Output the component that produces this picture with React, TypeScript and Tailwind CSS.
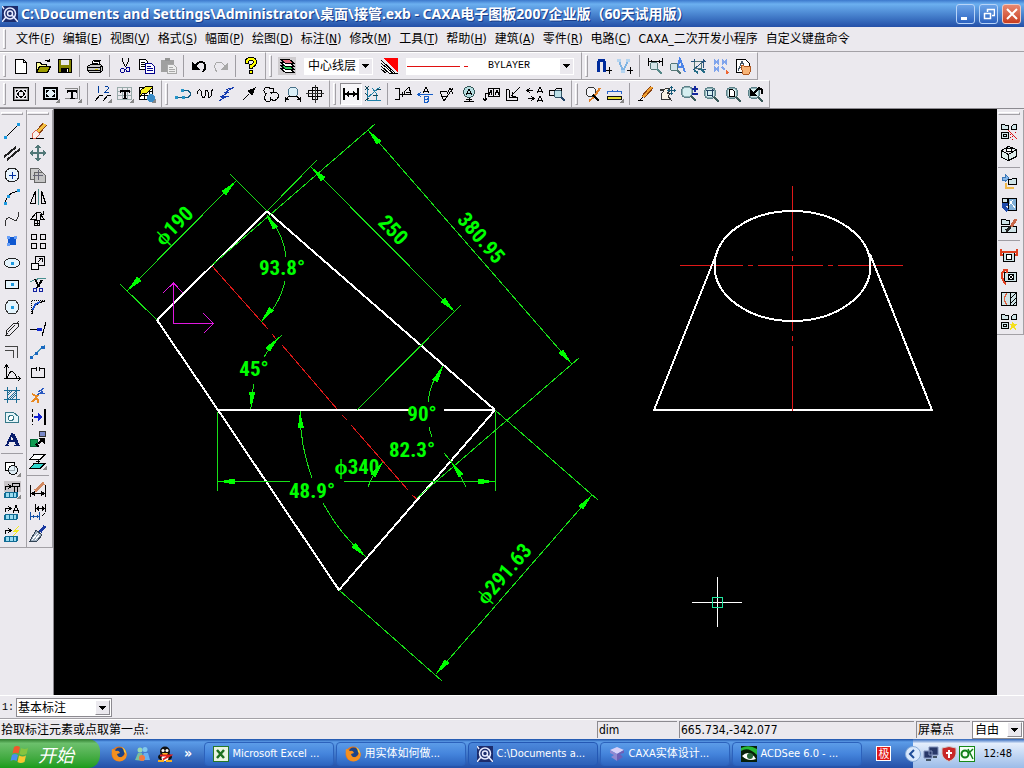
import type { ReactNode } from "react";

type PathProps = { d: string; c?: string; f?: string; w?: number };

const P = ({ d, c = "#000", f = "none", w = 1 }: PathProps) => (
  <path d={d} stroke={c} fill={f} strokeWidth={w} />
);

const Lens = ({ x = 8, y = 8 }: { x?: number; y?: number }) => (
  <>
    <circle cx={x} cy={y} r="6" fill="#d5eef0" stroke="#5b8088" />
    <circle cx={x} cy={y} r="5" fill="none" stroke="#8fb0b4" />
    <path d={`M${x + 4} ${y + 4}l5 5`} stroke="#3a5a5a" strokeWidth="2" />
  </>
);

const Corner = () => <path d="M18 13v5h-5z" fill="#888" />;

const Part = () => (
  <>
    <P d="M1.5 7.5v-5h3l1 1h3v4z" f="#cfe3e6" />
    <P d="M11.5 7.5v-3l2-2h3v5z" f="#cfe3e6" />
    <P d="M1.5 10.5h7v6h-7z" f="#cfe3e6" />
    <P d="M3.5 12.5h3v2h-3z" />
  </>
);

const Strip = () => (
  <>
    <rect x="1" y="11" width="14" height="6" rx="2" fill="#106c94" />
    <path d="M3 12h3v4H3zM7 12h3v4H7zM11 12h2v4h-2z" fill="#9adcf0" />
  </>
);

const Hook = () => <P d="M2.5 9V5.5h5M5 3l3 2.5L5 8" />;

const icons: Record<string, ReactNode> = {
  new: <P d="M3.5 2.5h8l3 3v11h-11zM11.5 2.5v3h3" f="#fff" />,
  open: (
    <>
      <P d="M2.5 15.5v-10h4l1 2h5v2" f="#ffff9c" />
      <P d="M2.5 15.5l3-6h11l-3 6z" f="#9c9c00" />
      <P d="M10.5 4.5q2-3 5 0M15.5 1.5v3h-3" />
    </>
  ),
  save: (
    <>
      <P d="M2.5 2.5h13v13h-13z" f="#848400" />
      <P d="M5 3h8v5H5z" c="none" f="#e8e8e8" />
      <P d="M5 11h8v5H5z" c="none" f="#000" />
      <P d="M11 12h1v3h-1z" c="none" f="#fff" />
    </>
  ),
  print: (
    <>
      <P d="M5.5 8l2-5h7l-2 5" f="#fff" />
      <P d="M1.5 9.5l3-2h10l2 2v4l-2 2h-11l-2-2z" f="#c8c8c8" />
      <P d="M2 10.5h12l2-2M8 4.5h5M7 6.5h5M2 13.5h12M14.5 10v5" />
      <P d="M9 12h3" c="#d8c800" />
    </>
  ),
  cut: (
    <>
      <P d="M6.5 1v3l3 6M12.5 1v3l-3 6" />
      <circle cx="6.5" cy="13.5" r="2" fill="none" stroke="#00008c" strokeWidth="1" />
      <circle cx="12" cy="12.5" r="2" fill="none" stroke="#00008c" strokeWidth="1" />
    </>
  ),
  copy: (
    <>
      <P d="M1.5 2.5h6l2 2v8h-8zM3 5.5h4M3 7.5h4M3 9.5h4" f="#fff" />
      <P d="M7.5 6.5h6l3 3v7h-9zM9 9.5h4M9 11.5h6M9 13.5h6" c="#00008c" f="#fff" />
    </>
  ),
  paste: (
    <>
      <P d="M1 3h13v12H1z" c="none" f="#a0a0a0" />
      <P d="M5 1h5v3H5z" c="none" f="#949494" />
      <P d="M7.5 7.5h6l3 3v6h-9zM9 10.5h4M9 12.5h6M9 14.5h6" c="#a8a8a8" f="#eee" />
    </>
  ),
  undo: (
    <>
      <P d="M5 9q5-6 9-3 3 4-1 9" w={2} />
      <P d="M2 5v8h8z" c="none" f="#000" />
    </>
  ),
  redo: (
    <>
      <P d="M13 9Q8 3 4 6q-3 4 1 9" c="#a8a8a8" />
      <P d="M16 5v8H8z" c="none" f="#a8a8a8" />
    </>
  ),
  help: (
    <>
      <path d="M5 7V4q0-2 4-2t4 3q0 3-4 4v3" stroke="#000" fill="none" strokeWidth="4" />
      <path d="M5 6V4q0-2 4-2t4 3q0 3-4 4v2" stroke="#ff0" fill="none" strokeWidth="2" />
      <circle cx="9" cy="15" r="2" fill="#ff0" stroke="#000" />
    </>
  ),
  layers: (
    <>
      <rect width="18" height="18" fill="#cfcccf" />
      <P d="M2.5 11.5h9l5 4h-9z" f="#fff" />
      <P d="M2.5 8.5h9l5 4h-9z" f="#30d060" />
      <P d="M2.5 5.5h9l5 4h-9z" f="#fff" />
      <P d="M2.5 2.5h9l5 4h-9z" f="#e87080" />
    </>
  ),
  color: (
    <>
      <P d="M.5 3.500l14 13M.5 6.500l12 10h4M.5 9.500l8 7h6M.5 12.500l5 4" f="#fff" />
      <path d="M2 1h15v15z" fill="#f00" />
    </>
  ),
  magnet: (
    <>
      <P d="M4.5 15V6q0-3 3-3t3 3v9" c="#002c9c" w={3} />
      <P d="M12 13.500h6M15 10v7" />
      <P d="M15 12v3M13.500 13.500h3" />
    </>
  ),
  vnav: (
    <>
      <P d="M3 4l4 10 5-10" c="#7fb4e4" w={2} />
      <P d="M1 3.500h4M10 3.500h4M5 14h4" c="#b4d4f0" w={3} />
      <P d="M11 13.500h6M14 10v7" />
    </>
  ),
  qdim: (
    <>
      <P d="M2.5 1v8M16.5 1v8M3 4.500h13M5.500 3v3M13.500 3v3" />
      <circle cx="8" cy="9" r="4" fill="#d4e4e8" stroke="#577" />
      <P d="M11 12l5 5" c="#588" w={2} />
    </>
  ),
  qtext: (
    <>
      <P d="M8 14l4-12 5 13M9 10h6" c="#4c84e8" w={2} />
      <circle cx="6" cy="10" r="4" fill="#d4e4e8" stroke="#577" />
      <P d="M9 13l4 4" c="#577" w={2} />
    </>
  ),
  qhatch: (
    <>
      <P d="M1 4.500h15M4.500 2v11M3 13L15 3M13.500 2v9M8 12.500h8" c="#25527c" />
      <circle cx="8" cy="8" r="4" fill="none" stroke="#577" />
      <P d="M4 13l4 3M11 12l4 4" c="#256c86" w={2} />
    </>
  ),
  four: (
    <>
      <P d="M2 3l5 4M7 3L2 7M10 3l5 4M15 3l-5 4M2 10l5 4M7 10l-5 4" c="#7fa4ec" w={2} />
      <P d="M10 10l3 3" c="#7fa4ec" w={2} />
      <path d="M14 12l3 4-3 1z" fill="#e63" />
    </>
  ),
  hand: (
    <>
      <P d="M2.5 2.5h9l4 4v9h-13z" f="#fff" />
      <P d="M4 14l4-10 2 5M5 10.500h4" c="#456" />
      <P d="M7 9l2-1 2 2 5-1 1 4-2 4H9z" c="#b05820" f="#f7b478" />
    </>
  ),
  fit: (
    <>
      <P d="M1.500 2.500h15v13h-15z" />
      <P d="M2.500 3.500h13v11h-13z" c="#888" />
      <path d="M9 4l2 3H7zM9 14l2-3H7zM4 9l3-2v4zM14 9l-3-2v4zM4 5h3L4 7zM14 5h-3l3 2zM4 13h3l-3-2zM14 13h-3l3-2z" fill="#000" />
    </>
  ),
  frame: (
    <>
      <P d="M2 3h13v11H2z" w={2} f="#e4f0f6" />
      <path d="M4 5h4L4 8zM13 5H9l4 3zM4 12h4L4 9zM13 12H9l4-3z" fill="#000" />
      <Corner />
    </>
  ),
  title: (
    <>
      <P d="M1 3.500h12v10H1M15.500 1v14" c="#888" />
      <P d="M4 6h8M8 6v8" w={2} />
      <P d="M6 13.500h5M3.500 5v3M12.500 5v3" />
      <Corner />
    </>
  ),
  number: (
    <>
      <P d="M1 16l5-6h3M9 16l5-6h3" />
      <P d="M4.500 7.500v-6l-1 1M10.500 2.500l1-1h2l1 1v1l-4 4h4" c="#003c9c" />
      <Corner />
    </>
  ),
  table: (
    <>
      <P d="M1 2.500h15M1 6.500h15M1 10.500h15M1 14.500h15M1.500 2v13M6.500 2v13M11.500 2v13M15.500 2v13" c="#9aa" />
      <P d="M5 6h8M9 6v8" w={2} />
      <P d="M7 13.500h4M4.500 5v3M13.500 5v3" />
      <Corner />
    </>
  ),
  bom: (
    <>
      <P d="M1.500 2.500h13v12h-13zM2 6.500h13M2 10.500h13M6.500 3v12M11 3v12" f="#fff" />
      <path d="M8 1l7 1-7 7-3-1-4 5 2-8z" fill="#f4ec20" stroke="#000" />
      <circle cx="13" cy="13" r="4" fill="#3a8cc8" />
      <Corner />
    </>
  ),
  polyline: (
    <>
      <P d="M1 12.500h7M9 5.500h5l2 2v3l-2 2H9" c="#155a80" />
      <path d="M1 11h3v3H1zM8 11h3v3H8zM7 4h3v3H7z" fill="#2694c8" />
    </>
  ),
  wave: <P d="M1 9q1-5 3-4t2 6q1 4 3 0V7q2-4 3 0v4q1 3 3 0V7l2-3" />,
  zig: <P d="M1 16l8-5H4l7-4H8l8-5M8 4.500l8-2M3 13l8-2" c="#163cb0" />,
  arrow: (
    <>
      <P d="M3 15L9 9" />
      <path d="M16 2l-4 9-5-5z" fill="#000" />
    </>
  ),
  cloud: <P d="M5 9q-5-2-2-6 4-2 5 1 4-2 4 2-1 2-4 1M4 9q-3 4 0 7h4q2-2 0-4M9 9q3-3 6-1 3 3 0 6-3 3-6 0" />,
  circles: (
    <>
      <circle cx="9" cy="7" r="5" fill="#dcf0f8" stroke="#487088" />
      <P d="M2 15l3-4h8l3 4M1.500 12v5M16.500 12v5M2 14.500h3M13 14.500h3" />
    </>
  ),
  hole: (
    <>
      <P d="M2.500 5.500h13v6h-13z" />
      <P d="M6.500 2.500h5v12h-5z" />
      <P d="M0 8.500h18M9 0v18" c="#333" />
    </>
  ),
  dim: (
    <>
      <P d="M2 3v12M16 3v12M2 9h14" w={2} />
      <path d="M3 9l4-3v6zM15 9l-4-3v6z" fill="#000" />
    </>
  ),
  coord: (
    <>
      <P d="M3.500 3v12h13M3 13L16 2M8 3l4 5v8" c="#2182a8" />
      <P d="M1 1l4 4M5 1L1 5M1 8l3 3M1 16l4-3M13 4h4M9 10h5" c="#145" />
    </>
  ),
  d1: <P d="M1 3.500h4v11H1M5 9.500h7M8 7v5M10 9V7l5-5 2 7h-6M12 7h4" />,
  d2: (
    <>
      <P d="M7 8l3-6 3 6M8 6h4" />
      <P d="M2 9.500h15M5 7L2 9.500 5 12" c="#155ec8" />
      <P d="M8.500 11v6h3l1-1v-1l-1-1h-3 3l1-1v-1l-1-1z" c="#155ec8" />
    </>
  ),
  d3: <P d="M2 6.500h7M2 7l4 9 9-13M4 11h4M9 9l3-6 3 6" />,
  d4: (
    <>
      <circle cx="9" cy="7" r="5.500" fill="#b5dde0" stroke="#355" />
      <P d="M6 10l3-6 3 6M7 8.500h4M9.500 13v3M4 16.500h10M6 14.500h6" />
    </>
  ),
  d5: <P d="M6.500 3.500h11v8h-11zM11.500 4v7M13 10l2-5 2 5M6 8.500H3V16M1 13l2 3 2-3M7 10l2-5 1 5" />,
  d6: <P d="M2.500 4v11h11M5.500 5v7h7M16 2l-9 9M8 7v4h4M13.500 12v3M2 4.500h3" />,
  d7: <P d="M1 5.500h6M4 3L1 5.500 4 8M2 13.500h6M5 11l3 2.500L5 16M11 8l3-6 3 6M12 6.500h4M11 17l3-6 3 6M12 15.500h4" />,
  d8: (
    <>
      <P d="M1.500 9.500v-4h5l2-2h5v7h-12z" />
      <circle cx="10" cy="9" r="4" fill="#bde0e8" stroke="#356" />
      <P d="M13 12l4 4" c="#246" w={2} />
    </>
  ),
  z1: (
    <>
      <circle cx="7" cy="7" r="5" fill="#f4f4f8" stroke="#333" />
      <P d="M16 3l-6 9-5 4" c="#e08028" w={2} />
      <P d="M9 10l6 6" w={2} />
    </>
  ),
  z2: (
    <>
      <P d="M1 6.500h15" c="#2864c8" />
      <P d="M1.500 6v3M6.500 5v2M11.500 5v2M15.500 6v3" c="#2864c8" />
      <path d="M1 11h15v4H1z" fill="#111" />
      <P d="M2 13h13" c="#e8dc30" w={2} />
      <Corner />
    </>
  ),
  pencil: (
    <>
      <P d="M16 2l-9 10" c="#8a4010" w={4} />
      <P d="M16 2l-9 10" c="#f0a030" w={2} />
      <P d="M7 12l-3 3q-4 1 3 1" />
    </>
  ),
  pan: (
    <>
      <P d="M3 9l3-3-4-1 5-1 4-1 1 3-3 2 3 1-2 2 3 4-6-1-4 1z" f="#f8f0e4" c="#333" />
      <P d="M10 5.500h7M13.500 2v7" c="#185a78" />
      <path d="M13.500 1l2 2h-4zM13.500 10l2-2h-4zM9 5.500l2-2v4zM18 5.500l-2-2v4z" fill="#185a78" />
    </>
  ),
  zoomin: (
    <>
      <Lens x={7} y={7} />
      <P d="M12 4h6M15 1v6M12 9h6" c="#14289c" w={2} />
    </>
  ),
  zoomwin: (
    <>
      <Lens />
      <P d="M5.500 5.500h5v5h-5zM4 5.500h8M10.500 4v8" c="#204060" />
    </>
  ),
  zoompage: (
    <>
      <Lens />
      <P d="M5.500 4.500h3l2 2v5h-5z" f="#fff" />
    </>
  ),
  zoomback: (
    <>
      <Lens />
      <path d="M4 4v7h7z" fill="#000" />
      <P d="M6 10l7-7 3 2v4" w={2} />
    </>
  ),
  line: (
    <>
      <P d="M3 15L15 3" />
      <path d="M1 14h3v3H1zM14 1h3v3h-3z" fill="#1c9ae0" />
    </>
  ),
  parallel: <P d="M1 13L13 3M4 16L17 5" w={2} c="#222" />,
  circle: (
    <>
      <circle cx="9" cy="9" r="7" fill="#e8f4fc" stroke="#222" />
      <P d="M6 9.500h7M9.500 6v7" c="#0030a0" />
    </>
  ),
  arc: (
    <>
      <P d="M2 16Q3 5 16 3" />
      <path d="M1 14h3v3H1zM4 7h3v3H4zM14 1h3v3h-3z" fill="#1c9ae0" />
    </>
  ),
  spline: <P d="M2 16V12q2-5 5-4t5 3q3-1 4-9" c="#333" />,
  point: (
    <>
      <path d="M5 5h8v8H5z" fill="#1058d0" />
      <path d="M4 4h3v3H4zM11 4h3v3h-3zM4 11h3v3H4z" fill="#68a0f8" />
    </>
  ),
  ellipse: (
    <>
      <ellipse cx="9" cy="9" rx="7.500" ry="5" fill="#e4f4fc" stroke="#222" />
      <path d="M8 8h3v3H8z" fill="#1c9ae0" />
    </>
  ),
  rect: (
    <>
      <P d="M2.500 4.500h13v8h-13z" f="#e4f4fc" />
      <path d="M8 7h3v3H8z" fill="#1c9ae0" />
    </>
  ),
  polygon: (
    <>
      <P d="M5.500 2.500h7l3 4v5l-3 4h-7l-3-4v-5z" f="#e4f4fc" c="#333" />
      <path d="M8 8h3v3H8z" fill="#1c9ae0" />
    </>
  ),
  slot: <P d="M3 11l8-8h4v4l-8 8H3zM5 12l7-7M2 16l3-3M13 4l3-3" c="#222" />,
  offset: <P d="M2 4.500h12v11M2 8.500h8v7" c="#444" />,
  curve: <P d="M3.500 2v13M1 14.500h16M1 4l2.500-3L6 4M4 14q3-8 6-6t4 6M15 12l2 2.500-2 2.500" />,
  hatch: <P d="M1 4.500h16M1 13.500h16M4.500 1v16M13.500 1v16M5 9l4-4M5 13l8-8M9 13l4-4M7 13l6-6M5 7l2-2" c="#1c6c94" />,
  plate: (
    <>
      <P d="M2.500 4.500h8l5 4v6h-13z" c="#357888" f="#e4f4f8" />
      <circle cx="8" cy="10" r="2.500" fill="#fff" stroke="#357888" />
    </>
  ),
  text: (
    <>
      <P d="M4 15L9 4l5 11M6 11h6" c="#081c6c" w={2} />
      <P d="M10 4l5 11" c="#081c6c" w={3} />
      <P d="M2 15.500h4M11 15.500h6" c="#081c6c" />
    </>
  ),
  block: (
    <>
      <P d="M2.500 3.500h9v8h-9z" f="#fff" />
      <circle cx="10" cy="11" r="4.500" fill="#d8ecf8" fillOpacity=".7" stroke="#111" />
      <Corner />
    </>
  ),
  lib1: (
    <>
      <rect x="1" width="17" height="11" fill="#c8c4c8" />
      <Hook />
      <P d="M9.500 2.500h7v3h-7zM11.500 6v5M14.500 6v5" />
      <Strip />
      <Corner />
    </>
  ),
  lib2: (
    <>
      <Hook />
      <P d="M10 10l3-8 3 8M11 7.500h4" />
      <Strip />
    </>
  ),
  lib3: (
    <>
      <Hook />
      <path d="M16 1l-7 6h4l-3 4 7-6h-4z" fill="#f4ea20" />
      <Strip />
    </>
  ),
  erase: (
    <>
      <P d="M1 16.500h14" />
      <P d="M16 2l-8 9" c="#8a4010" w={5} />
      <P d="M16 2l-8 9" c="#f4c040" w={3} />
      <path d="M3 12l4-4 4 4-4 4H4z" fill="#f8f0ec" stroke="#d65" />
    </>
  ),
  move: (
    <>
      <P d="M9 3v12M3 9h12" c="#527878" w={2} />
      <path d="M9 0l3 4H6zM9 18l3-4H6zM0 9l4-3v6zM18 9l-4-3v6z" fill="#527878" />
    </>
  ),
  copymove: (
    <>
      <P d="M1.500 2.500h8l3 3v8h-11z" c="#666" f="#ccc" />
      <P d="M5.500 6.500h8l3 3v7h-11z" c="#666" f="#c4c4c4" />
      <P d="M9 4v10M4 9h10" c="#667" />
    </>
  ),
  mirror: (
    <>
      <P d="M6.500 3v12h-5zM12.500 3v12h4z" />
      <P d="M9.500 1v16" c="#4a8c8c" />
    </>
  ),
  rotate: (
    <>
      <P d="M7 3L2 9h5zM11 4l4 5h-4zM7 2h4l2 2M11 4h3V1" />
      <circle cx="8" cy="13" r="3" fill="none" stroke="#000" />
      <P d="M6 13.500h5M8.500 11v5" />
    </>
  ),
  array: <P d="M2.500 2.500h5v5h-5zM11.500 2.500h5v5h-5zM2.500 11.500h5v5h-5zM11.500 11.500h5v5h-5z" />,
  scale: (
    <>
      <P d="M6.500 2.500h9v9h-9z" />
      <P d="M2.500 9.500h7v6h-7z" f="#f4f3f6" />
      <P d="M9 8l4-4M10 4.500h3V8" />
    </>
  ),
  trim: (
    <>
      <P d="M1 6q7-4 16-4" c="#489090" />
      <P d="M6 3l4 8M13 4l-5 8" w={2} />
      <circle cx="6" cy="14" r="2" fill="none" stroke="#1020a0" />
      <circle cx="12" cy="14" r="2" fill="none" stroke="#1020a0" />
    </>
  ),
  fillet: (
    <>
      <path d="M2.500 16V2.500H16" stroke="#000" fill="none" strokeDasharray="1 1" />
      <P d="M3 16Q4 5 16 3" />
      <P d="M4 12Q5 6 11 4" c="#1c50c8" w={2} />
    </>
  ),
  extend: (
    <>
      <P d="M1 9.500h7" />
      <P d="M8 9h5" c="#1028d0" w={3} />
      <P d="M17 2l-4 14" />
    </>
  ),
  stretch: (
    <>
      <P d="M2 16L16 3" c="#4090b8" />
      <path d="M1 14h3v3H1zM6 10h3v3H6zM12 4h4v3h-4z" fill="#1868c0" />
    </>
  ),
  brk: <P d="M7 4.500H2.500v9h13v-9H11M7.500 3v4M10.500 3v4" />,
  explode: (
    <>
      <P d="M3 16l6-7M3 8l4 2M5 13h4M9 13v4" c="#e88820" w={2} />
      <P d="M9 6l6-4M10 8l6-1M12 3l2 5M8 9l6-4" c="#2858c0" />
    </>
  ),
  shift: (
    <>
      <path d="M3.500 1v16" stroke="#000" strokeDasharray="3 2" />
      <P d="M16 1v16" w={2} />
      <P d="M5 9h5" c="#1020d0" w={2} />
      <path d="M9 5l5 4-5 4z" fill="#1020d0" />
    </>
  ),
  convert: (
    <>
      <path d="M1 9h7v7H1z" fill="#109c50" stroke="#063" />
      <path d="M10 1h6v5h-6z" fill="#7888c8" stroke="#333" />
      <P d="M9 14l5-5M7 14l3 3" w={2} />
      <path d="M9 8h7v7z" fill="#000" />
    </>
  ),
  planes: (
    <>
      <P d="M5 2.500h11l-5 5H1z" f="#fff" />
      <P d="M5 11.500h11l-5 5H1z" f="#30d8d0" />
      <P d="M9 7v4M7 9.500h4" />
      <Corner />
    </>
  ),
  dimedit: (
    <>
      <P d="M1.500 4v12M16.500 4v12M2 12.500h14" />
      <path d="M2 12.500l4-3v6zM16 12.500l-4-3v6z" fill="#000" />
      <P d="M15 2l-9 8" c="#d08860" w={3} />
    </>
  ),
  dimalign: (
    <>
      <P d="M6.500 1v8M16.500 1v8M7 5.500h9M16 10l-3 3" />
      <path d="M7 5.500l3-3v6zM16 5.500l-3-3v6z" fill="#000" />
      <P d="M1.500 9v8M10.500 9v8M2 13.500h8M4 12v3M8 12v3" c="#1050a8" />
    </>
  ),
  brush: (
    <>
      <P d="M16 1l-5 6" c="#1838a0" w={3} />
      <path d="M7 5l6 5-5 6H1z" fill="#a0b0c0" stroke="#345" />
      <P d="M3 15l6-7M6 15l5-6" c="#fff" />
    </>
  ),
  r1: (
    <>
      <Part />
      <P d="M8 8l9 9" c="#e01818" />
      <path d="M10 12h1v1h-1zM10 15h1v1h-1zM15 10h1v1h-1zM12 17h1v1h-1zM12 14h1v1h-1z" fill="#c00" />
    </>
  ),
  r2: (
    <>
      <P d="M1.500 6.500l7-4 8 3v7l-8 4-7-3zM1.500 6.500l7 4 8-5M8.500 10.500v6" f="#dceae8" />
      <ellipse cx="9" cy="6" rx="3" ry="1.500" fill="#fff" stroke="#000" />
    </>
  ),
  r3: (
    <>
      <P d="M2 7V4h3V1l4 4-4 4V7z" c="#3c78b8" f="#88b8e8" />
      <P d="M8.500 9.500v-3h3l1-1h4v6h-8z" f="#cfe3e6" />
      <P d="M6 10v5h8" c="#f0b848" w={2} />
    </>
  ),
  r4: (
    <>
      <P d="M8.500 3.500h8v12h-8z" f="#80b0d8" />
      <P d="M2.500 3.500h5v4h-5z" f="#cfe3e6" />
      <path d="M2 8h6v3H5l4 3-3 3-4-4z" fill="#1c48a8" />
      <P d="M10 6l5 7M9 10l4-5" c="#fff" />
    </>
  ),
  r5: (
    <>
      <P d="M1.500 7.500v-5h4l1 1h3v4zM1.500 9.500h15v6h-15z" f="#cfe3e6" />
      <P d="M16 2l-5 8" c="#c86848" w={3} />
      <P d="M11 10l-5 4" c="#222" w={3} />
    </>
  ),
  r6: (
    <>
      <P d="M3.500 6.500h11v9h-11z" f="#cfe3e6" />
      <circle cx="9" cy="11" r="3" fill="#fff" stroke="#000" />
      <P d="M1 3v6h2M17 3v6h-2M2 6h14" c="#e04020" w={2} />
    </>
  ),
  r7: (
    <>
      <P d="M4.500 4.500h12v9h-12z" f="#cfe3e6" />
      <circle cx="11" cy="9" r="3" fill="#fff" stroke="#000" />
      <P d="M9 7l4 4M13 7l-4 4" />
      <P d="M6 2Q1 4 2 9t4 7M3 2h4v3" c="#e04020" w={2} />
    </>
  ),
  r8: (
    <>
      <P d="M1.500 2.500h15v13h-15zM10.500 3v12M11 8l5-5M11 13l5-5M13 15l3-3" f="#cfe3e6" />
      <P d="M7 3Q2 9 7 15" c="#e06040" />
    </>
  ),
  r9: (
    <>
      <Part />
      <path d="M13 9l1 3h4l-3 2 1 4-3-2-3 2 1-4-2-2h3z" fill="#f4e020" />
    </>
  ),
};

const Icon = ({ name }: { name: string }) => (
  <svg viewBox="0 0 18 18" className="h-[18px] w-[18px]" shapeRendering="crispEdges" aria-hidden="true">
    {icons[name]}
  </svg>
);

const Tool = ({ name, on = false }: { name: string; on?: boolean }) => (
  <button
    type="button"
    aria-label={name}
    className={
      on
        ? "flex h-[22px] w-[22px] shrink-0 items-center justify-center border border-t-[#8c8a90] border-l-[#8c8a90] border-r-white border-b-white bg-[#f6f5f8]"
        : "flex h-[22px] w-[22px] shrink-0 items-center justify-center hover:bg-white/60"
    }
  >
    <Icon name={name} />
  </button>
);

const Bar = ({ children }: { children: ReactNode }) => (
  <div className="flex items-center border-t border-r border-b border-t-white border-r-[#a3a1a6] border-b-[#a3a1a6] pr-[3px] pl-[3px]">
    <span className="mr-1 h-[22px] w-[3px] border border-t-white border-l-white border-r-[#a3a1a6] border-b-[#a3a1a6]" />
    {children}
  </div>
);

const Sep = () => <span className="mr-1 ml-[3px] h-[22px] w-px bg-[#9f9da3]" />;

const Tools = ({ names, active }: { names: string; active?: string }) => (
  <>
    {names.split(" ").map((n, i) => (n === "|" ? <Sep key={i} /> : <Tool key={n} name={n} on={n === active} />))}
  </>
);

const VBar = ({ names, active }: { names: string; active?: string }) => (
  <div className="flex w-[27px] flex-col items-center self-start border-r border-b border-r-[#a3a1a6] border-b-[#a3a1a6] pt-[2px] pr-[2px] pb-[2px]">
    <span className="mb-[5px] h-[3px] w-[22px] border border-t-white border-l-white border-r-[#a3a1a6] border-b-[#a3a1a6]" />
    {names.split(" ").map((n, i) =>
      n === "|" ? <span key={i} className="my-[3px] h-px w-[22px] bg-[#9f9da3]" /> : <Tool key={n} name={n} on={n === active} />,
    )}
  </div>
);

const Down = () => (
  <svg viewBox="0 0 7 4" className="h-1 w-[7px]" shapeRendering="crispEdges" aria-hidden="true">
    <path d="M0 0h7L3.500 4z" fill="#000" />
  </svg>
);

type ComboProps = { label: string; value: string; size: string; flat?: boolean; children?: ReactNode };

const Combo = ({ label, value, size, flat = false, children }: ComboProps) => (
  <label className={`flex items-center bg-white ${size}`}>
    {children}
    <select aria-label={label} className="min-w-0 flex-1 appearance-none bg-white pl-1 leading-4 outline-none">
      <option>{value}</option>
    </select>
    <span
      className={
        flat
          ? "mr-px flex h-[15px] w-[13px] items-center justify-center bg-[#ebe9ee]"
          : "mr-px flex h-[15px] w-[15px] items-center justify-center border border-t-white border-l-white border-r-[#8c8a90] border-b-[#8c8a90] bg-[#ebe9ee]"
      }
    >
      <Down />
    </span>
  </label>
);

const menus: [string, string][] = [
  ["文件", "F"], ["编辑", "E"], ["视图", "V"], ["格式", "S"], ["幅面", "P"], ["绘图", "D"], ["标注", "N"],
  ["修改", "M"], ["工具", "T"], ["帮助", "H"], ["建筑", "A"], ["零件", "R"], ["电路", "C"],
];

const AppLogo = () => (
  <svg viewBox="0 0 16 16" className="h-4 w-4 shrink-0" aria-hidden="true">
    <rect width="16" height="16" fill="#1c2c6c" />
    <circle cx="8" cy="7.5" r="5.5" fill="none" stroke="#e8ecff" strokeWidth="1.5" />
    <circle cx="8" cy="7.5" r="2.5" fill="none" stroke="#e8ecff" strokeWidth="1.5" />
    <path d="M0 16l4-5M10 9l6 7M2 3L0 0" stroke="#e8ecff" strokeWidth="1.5" />
  </svg>
);

const Firefox = () => (
  <svg viewBox="0 0 16 16" className="h-4 w-4 shrink-0" aria-hidden="true">
    <circle cx="8" cy="8" r="7.5" fill="#e87818" />
    <circle cx="8.5" cy="6.5" r="5" fill="#1c4488" />
    <path d="M1 3q2 0 4 2 3-1 4 2l-3 1q1 4 5 3 4-2 3-7 4 6-1 10-5 3-10-1Q0 8 1 3z" fill="#f49020" />
    <path d="M11 1q4 2 4 7l-2-2q0-3-2-5z" fill="#f8cc40" />
  </svg>
);

const WinFlag = () => (
  <svg viewBox="0 0 20 18" className="h-[18px] w-5" aria-hidden="true">
    <path d="M4 2q3-2 6 0L8.5 8.500Q5 7 2.500 8.500z" fill="#f0582c" />
    <path d="M11 3q4 2 7 0l-1.500 6q-4 2-7 0z" fill="#86c440" />
    <path d="M2 10q3-2 6 0l-1.500 6q-3-2-6 0z" fill="#4890f0" />
    <path d="M9 10.500q4 2 7 0L14.500 17q-4 2-7 0z" fill="#f8c830" />
  </svg>
);

const Arrow = ({ x, y, a }: { x: number; y: number; a: number }) => (
  <path d="M0 0L-17 3L-17 -3z" fill="#00ff00" transform={`translate(${x} ${y}) rotate(${a})`} />
);

const dims: [number, number, number, string][] = [
  [174, 226, -45, "ϕ190"],
  [282, 268, 0, "93.8°"],
  [254, 369, 0, "45°"],
  [393, 230, 46, "250"],
  [481, 238, 49, "380.95"],
  [422, 414, 0, "90°"],
  [412, 450, 0, "82.3°"],
  [357, 467, 0, "ϕ340"],
  [312, 491, 0, "48.9°"],
  [504, 574, -49, "ϕ291.63"],
];

const Drawing = () => (
  <svg viewBox="54 109 943 586" className="h-full w-full bg-black" role="img" aria-label="接管">
    <g fill="none" stroke="#e01818" shapeRendering="crispEdges">
      <path d="M212 266L268 329M272 334L276 339M282 345L337 409M342 415L347 420M351 425L408 490M412 495L418 500" />
      <path d="M792.5 186v65M792.5 256v5M792.5 265v66M792.5 336v5M792.5 346v65" />
      <path d="M680 265.5h63M748 265.5h5M758 265.5h65M828 265.5h5M838 265.5h65" />
    </g>
    <g fill="none" stroke="#fff" strokeWidth="2" shapeRendering="crispEdges">
      <path d="M495 410L267 211L157 320L218 410L339 590L495 410M218 410H409M444 410H495" />
      <ellipse cx="792.5" cy="266" rx="78" ry="55" />
      <path d="M716 255L654 410H932L870 254" />
    </g>
    <path d="M792.5 390v21" stroke="#e01818" fill="none" />
    <g fill="none" stroke="#18e018" shapeRendering="crispEdges">
      <path d="M127 291L236 181M120 284L157 320M230 174L267 211" />
      <path d="M267 211L317 160M311 167L455 312M357 410L461 305" />
      <path d="M211 266L375 124M368 130L572 364M417 498L579 358" />
      <path d="M217.5 412V491M495.5 412V491M218 481.5H290M344 481.5H495" />
      <path d="M339 590L442 681M495 410L598 500M436 674L592 495" />
      <path d="M267 215A75 75 0 0 1 286 257M285 281A75 75 0 0 1 261 322" />
      <path d="M282 335A95 95 0 0 0 264 357M254 384A95 95 0 0 0 251 409" />
      <path d="M443 366A68 68 0 0 0 428 402M429 427A68 68 0 0 0 432 437M444 453Q457 467 466 487" />
      <path d="M300 411A195 195 0 0 0 312 478M323 503A195 195 0 0 0 366 557M383 462Q373 473 368 487" />
    </g>
    <g shapeRendering="crispEdges">
      <Arrow x={236} y={181} a={-45} />
      <Arrow x={127} y={291} a={135} />
      <Arrow x={311} y={167} a={225} />
      <Arrow x={455} y={312} a={45} />
      <Arrow x={368} y={130} a={229} />
      <Arrow x={572} y={364} a={49} />
      <Arrow x={218} y={481.5} a={180} />
      <Arrow x={495} y={481.5} a={0} />
      <Arrow x={592} y={495} a={-49} />
      <Arrow x={436} y={674} a={131} />
      <Arrow x={266} y={214} a={236} />
      <Arrow x={261} y={322} a={128} />
      <Arrow x={279} y={337} a={-48} />
      <Arrow x={251} y={409} a={94} />
      <Arrow x={443} y={366} a={-62} />
      <Arrow x={300} y={411} a={267} />
      <Arrow x={366} y={557} a={44} />
      <Arrow x={451} y={462} a={234} />
      <Arrow x={383} y={462} a={-54} />
    </g>
    <g fill="none" stroke="#e018e0" shapeRendering="crispEdges">
      <path d="M173.5 283V323.5H214M163 293L173.5 283L183 293M203 313L213.5 323.5L204 333" />
    </g>
    <g fill="none" shapeRendering="crispEdges">
      <path d="M692 602.5H742M717.5 577V627" stroke="#fff" />
      <rect x="712.5" y="597.5" width="10" height="10" stroke="#20e8a0" />
    </g>
    <g fill="#00ff00" className="font-['Roboto_Condensed','Liberation_Serif',serif] text-[21px] font-bold" textAnchor="middle">
      {dims.map(([x, y, a, t]) => (
        <text key={t} transform={`translate(${x} ${y}) rotate(${a})`} y="7">
          {t}
        </text>
      ))}
    </g>
  </svg>
);

const Task = ({ icon, text, on = false }: { icon: ReactNode; text: string; on?: boolean }) => (
  <button
    type="button"
    className={
      on
        ? "flex h-6 w-[130px] min-w-0 items-center gap-[3px] rounded-sm border border-[#2458b4] bg-linear-to-b from-[#4c88dc] to-[#2c60b8] px-2 text-white"
        : "flex h-6 w-[130px] min-w-0 items-center gap-[3px] rounded-sm border border-[#2c62bc] bg-linear-to-b from-[#5c9ce8] via-[#4484dc] to-[#2e66c0] px-2 text-white"
    }
  >
    {icon}
    <span className="whitespace-nowrap">{text}</span>
  </button>
);

const caption = "flex h-5 w-[19px] items-center justify-center rounded-[3px] border border-[#b8d4f8] bg-linear-to-b from-[#6ca4e8] to-[#2c62c0]";

export default function App() {
  return (
    <div className="flex h-screen min-h-[600px] flex-col overflow-hidden bg-[#ebe9ee] font-['DejaVu_Sans_Condensed','Noto_Sans','Noto_Sans_CJK_SC',sans-serif] text-[12px] leading-4 text-black">
      <header className="flex h-[27px] shrink-0 items-center gap-[3px] bg-linear-to-b from-[#3c78cc] via-[#6cb0f0] via-15% to-[#2450a8] pr-[3px] pl-[2px]">
        <AppLogo />
        <h1 className="flex-1 font-['Noto_Sans','Noto_Sans_CJK_SC',sans-serif] text-[14px] font-bold whitespace-nowrap text-white text-shadow-[1px_1px_0_#183c88]">
          C:\Documents and Settings\Administrator\桌面\接管.exb - CAXA电子图板2007企业版（60天试用版）
        </h1>
        <div className="flex gap-1">
          <button type="button" aria-label="最小化" className={caption}>
            <svg viewBox="0 0 12 12" className="h-3 w-3"><path d="M1 9h6v3H1z" fill="#fff" /></svg>
          </button>
          <button type="button" aria-label="还原" className={caption}>
            <svg viewBox="0 0 12 12" className="h-3 w-3"><path d="M4.500 4V1.500h7v6H9M1 5.500h7M1.500 5v5.500h6V5" fill="none" stroke="#fff" strokeWidth="1.5" /></svg>
          </button>
          <button type="button" aria-label="关闭" className="flex h-5 w-[19px] items-center justify-center rounded-[3px] border border-[#f0c8c0] bg-linear-to-b from-[#e88870] to-[#c83c1c]">
            <svg viewBox="0 0 12 12" className="h-3 w-3"><path d="M1 1l10 10M11 1L1 11" stroke="#fff" strokeWidth="2" /></svg>
          </button>
        </div>
      </header>

      <nav className="flex h-[25px] shrink-0 items-center border-b border-[#a3a1a6] pl-[3px]">
        <span className="mr-[10px] h-5 w-[3px] border border-t-white border-l-white border-r-[#a3a1a6] border-b-[#a3a1a6]" />
        <div className="flex gap-2 whitespace-nowrap">
          {menus.map(([t, k]) => (
            <button type="button" key={k} className="min-w-[38px] text-left">
              {t}(<span className="underline">{k}</span>)
            </button>
          ))}
          <button type="button">CAXA_二次开发小程序</button>
          <button type="button">自定义键盘命令</button>
        </div>
      </nav>

      <div className="flex h-7 shrink-0">
        <Bar><Tools names="new open save | print | cut copy paste | undo redo | help" /></Bar>
        <Bar>
          <Tool name="layers" />
          <Combo flat label="图层" value="中心线层" size="mx-[6px] h-[17px] w-[69px]" />
          <Tool name="color" />
          <Combo flat label="线型" value="BYLAYER" size="mr-1 ml-[5px] h-[17px] w-[168px] font-['Liberation_Mono',monospace] text-[10px] [&>select]:pl-5">
            <svg viewBox="0 0 61 3" className="ml-px h-[3px] w-[61px]" aria-hidden="true">
              <path d="M0 1.500h53M57 1.500h4" stroke="#e01010" />
            </svg>
          </Combo>
        </Bar>
        <Bar><Tools names="magnet vnav | qdim qtext qhatch four hand" /></Bar>
      </div>
      <div className="flex h-7 shrink-0">
        <Bar><Tools names="fit | frame title | number table bom" /></Bar>
        <Bar><Tools names="polyline wave zig arrow cloud circles hole" /></Bar>
        <Bar><Tools names="dim coord | d1 d2 d3 d4 d5 d6 d7 d8" active="dim" /></Bar>
        <Bar><Tools names="z1 z2 | pencil pan zoomin zoomwin zoompage zoomback" /></Bar>
      </div>

      <main className="flex min-h-0 flex-1 border-t border-[#8c8a90]">
        <aside className="flex w-[54px] shrink-0 border-r border-[#8c8a90] pt-px">
          <VBar names="line parallel circle arc spline point ellipse rect polygon slot offset curve hatch plate text | block lib1 lib2 lib3" />
          <VBar names="erase move copymove mirror rotate array scale trim fillet extend stretch brk explode shift convert planes | dimedit dimalign brush" />
        </aside>
        <section className="min-w-0 flex-1 bg-black">
          <Drawing />
        </section>
        <aside className="w-[27px] shrink-0 pt-px">
          <VBar names="r1 r2 | r3 r4 r5 | r6 r7 r8 r9" />
        </aside>
      </main>

      <div className="flex h-6 shrink-0 items-center border-t border-b border-t-white border-b-[#a3a1a6] pt-px pl-[2px]">
        <span className="w-[14px] font-['Liberation_Mono',monospace] text-[10px]">1:</span>
        <Combo label="标注类型" value="基本标注" size="h-[19px] w-[96px] border border-[#8c8a90] [&>select]:pl-px" />
      </div>

      <footer className="flex h-5 shrink-0 items-center gap-[2px] border-t border-white pl-px">
        <p className="flex-1">拾取标注元素或点取第一点:</p>
        <p className="h-[17px] w-[80px] border-t border-l border-[#8c8a90] pl-px">dim</p>
        <p className="h-[17px] w-[235px] border-t border-l border-[#8c8a90] pl-px">665.734,-342.077</p>
        <p className="h-[17px] w-[54px] border-t border-l border-[#8c8a90] pl-px">屏幕点</p>
        <Combo label="捕捉方式" value="自由" size="h-[18px] w-[52px] border border-[#8c8a90] [&>select]:pl-[2px]" />
      </footer>

      <div className="flex h-[29px] shrink-0 items-center bg-linear-to-b from-[#1c50a8] via-[#5c9ce8] via-10% to-[#2450a8] text-[11px] text-white">
        <button type="button" className="flex h-full w-[100px] items-center gap-2 rounded-r-xl bg-linear-to-b from-[#2c7c2c] via-[#6cc06c] via-15% to-[#189c18] pl-[10px] font-['Noto_Sans_CJK_SC',sans-serif] text-[18px] text-white italic">
          <WinFlag />
          开始
        </button>
        <div className="flex flex-1 items-center gap-[7px] pl-[11px]">
          <Firefox />
          <svg viewBox="0 0 16 16" className="h-4 w-4"><circle cx="6" cy="4" r="2.5" fill="#98d8b0" /><path d="M1 14l3-7h4l2 8z" fill="#78c0a0" /><circle cx="11" cy="3.5" r="2.5" fill="#80c8f0" /><path d="M7 14l3-7h4l2 7z" fill="#68b0f0" /><circle cx="8" cy="12" r="3" fill="#f07840" /></svg>
          <svg viewBox="0 0 16 16" className="h-4 w-4"><ellipse cx="8" cy="5.5" rx="5" ry="5" fill="#111" /><ellipse cx="8" cy="11" rx="7" ry="4" fill="#111" /><ellipse cx="8" cy="12" rx="3.5" ry="3" fill="#fff" /><circle cx="6" cy="4.5" r="1.5" fill="#fff" /><circle cx="10" cy="4.5" r="1.5" fill="#fff" /><path d="M5 7h6l-1 2H6z" fill="#f8b020" /><path d="M3 9.500h10l-7 4" stroke="#e02020" fill="none" strokeWidth="2" /><path d="M1 15h6M9 15h6" stroke="#f8b020" strokeWidth="2" /></svg>
          <span className="ml-1 self-start text-[14px] leading-none font-bold">»</span>
        </div>
        <div className="flex gap-[2px]">
          <Task text="Microsoft Excel ..." icon={<svg viewBox="0 0 16 16" className="h-4 w-4 shrink-0"><rect x=".5" y=".5" width="15" height="15" fill="#e8f4e0" stroke="#287828" /><path d="M4 4l7 8M11 4l-7 8" stroke="#1c7020" strokeWidth="2.5" /></svg>} />
          <Task text="用实体如何做..." icon={<Firefox />} />
          <Task on text="C:\Documents a..." icon={<AppLogo />} />
          <Task text="CAXA实体设计..." icon={<svg viewBox="0 0 16 16" className="h-4 w-4 shrink-0"><path d="M1 4l7-3 7 3-7 4z" fill="#d8d0f8" /><path d="M1 4l7 4v7l-6-4 3-2-4-2z" fill="#9088d0" /><path d="M15 4L8 8v7l6-4-3-3 4-1z" fill="#6c60b8" /></svg>} />
          <Task text="ACDSee 6.0 - ..." icon={<svg viewBox="0 0 16 16" className="h-4 w-4 shrink-0"><rect width="16" height="16" fill="#082008" /><path d="M0 5q7-5 16 4V3Q8-2 0 2z" fill="#28b838" /><path d="M1 10q7-7 14 3-8 3-14-3z" fill="#fff" /><circle cx="9" cy="10" r="3" fill="#286838" /></svg>} />
        </div>
        <span className="mr-[22px] ml-[14px] flex h-[15px] w-[15px] items-center justify-center border border-white bg-[#e01818] font-['Noto_Sans_CJK_SC',sans-serif] text-[11px] leading-none">极</span>
        <div className="flex h-full items-center gap-[2px] bg-linear-to-b from-[#2c64b8] via-[#e4eefc] via-15% to-[#9cbce8] pr-3 text-black">
          <button type="button" aria-label="显示图标" className="-ml-2 h-4 w-4">
            <svg viewBox="0 0 16 16"><circle cx="8" cy="8" r="7.5" fill="#d8e8fc" stroke="#88acd8" /><path d="M9 4L5 8l4 4" stroke="#1c4c98" fill="none" strokeWidth="2" /></svg>
          </button>
          <svg viewBox="0 0 16 16" className="h-4 w-4"><path d="M6 1h9v8H6zM1 5h8v7H1z" fill="#283868" stroke="#8090b8" /><path d="M3 14h5M10 11h4" stroke="#456" strokeWidth="2" /></svg>
          <svg viewBox="0 0 16 16" className="h-4 w-4"><path d="M1 2l7-1.500L15 2v6q-1 5-7 7.500Q2 13 1 8z" fill="#c82828" stroke="#ccc" /><path d="M8 4v8M5 7h6" stroke="#fff" strokeWidth="2" /></svg>
          <svg viewBox="0 0 16 16" className="h-4 w-4"><rect x=".5" y=".5" width="15" height="15" fill="#f4fff4" stroke="#188818" /><circle cx="6" cy="8" r="3.5" fill="none" stroke="#108018" strokeWidth="2" /><path d="M9 3l5 10M14 3l-4 4" stroke="#108018" strokeWidth="1.5" /></svg>
          <time className="pl-[6px]">12:48</time>
        </div>
      </div>
    </div>
  );
}
